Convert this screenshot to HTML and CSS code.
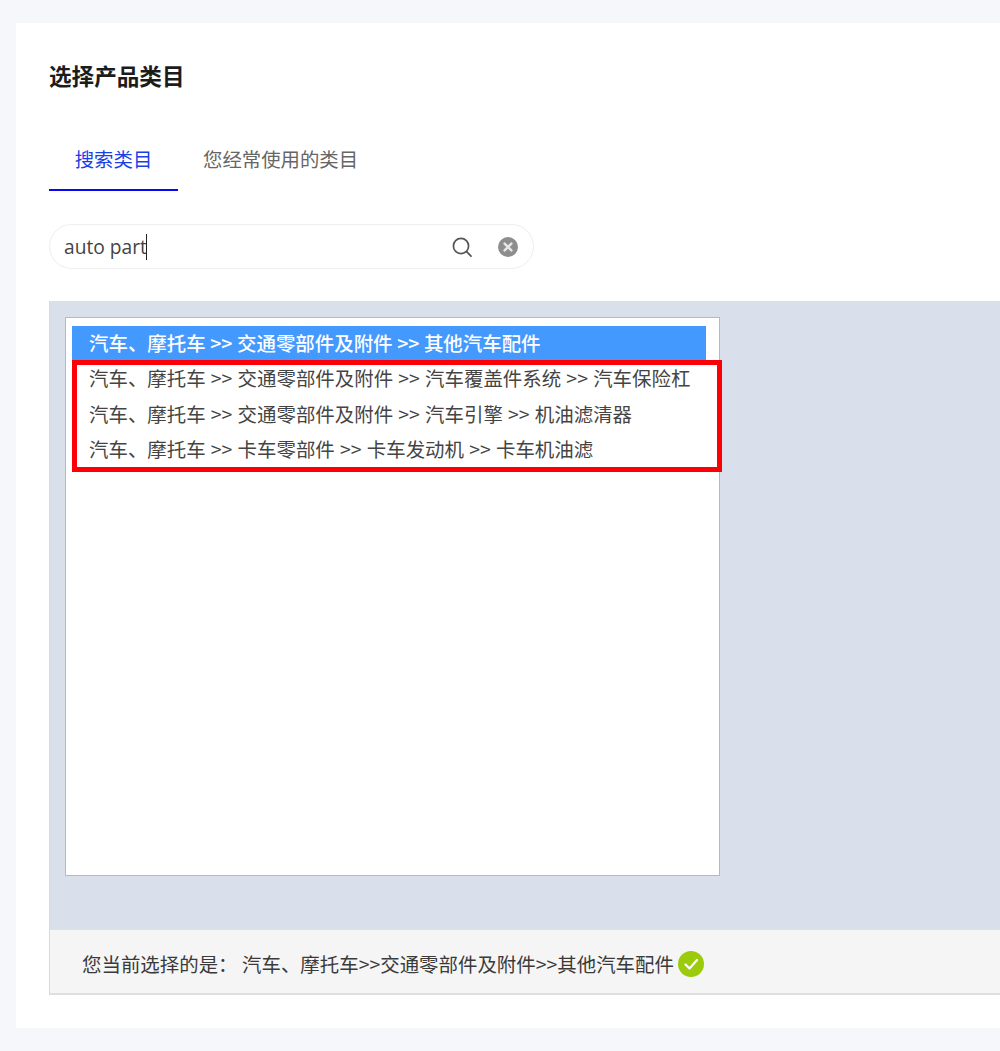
FILE: index.html
```html
<!DOCTYPE html>
<html lang="zh">
<head>
<meta charset="utf-8">
<title>选择产品类目</title>
<link rel="stylesheet" href="styles.css">
</head>
<body>
<div class="clip">
<main class="card">
  <h1 class="title">选择产品类目</h1>
  <nav class="tabs">
    <a class="tab tab-active">搜索类目</a>
    <a class="tab">您经常使用的类目</a>
  </nav>
  <div class="search">
    <span class="search-text">auto part</span><span class="caret"></span>
    <svg class="icon-search" width="22" height="22" viewBox="0 0 22 22" fill="none" stroke="#555" stroke-width="1.7" stroke-linecap="round"><circle cx="10" cy="10" r="7.6"/><path d="M15.6 15.6l4.4 4.6"/></svg>
    <svg class="icon-clear" width="20" height="20" viewBox="0 0 20 20"><circle cx="10" cy="10" r="10" fill="#8e8e8e"/><path d="M6.6 6.6l6.8 6.8M13.4 6.6l-6.8 6.8" stroke="#e8e8e8" stroke-width="2.4" stroke-linecap="round"/></svg>
  </div>
  <section class="panel">
    <div class="panel-body">
      <div class="listbox">
        <ul class="options">
          <li class="option option-selected">汽车、摩托车 &gt;&gt; 交通零部件及附件 &gt;&gt; 其他汽车配件</li>
          <li class="option">汽车、摩托车 &gt;&gt; 交通零部件及附件 &gt;&gt; 汽车覆盖件系统 &gt;&gt; 汽车保险杠</li>
          <li class="option">汽车、摩托车 &gt;&gt; 交通零部件及附件 &gt;&gt; 汽车引擎 &gt;&gt; 机油滤清器</li>
          <li class="option">汽车、摩托车 &gt;&gt; 卡车零部件 &gt;&gt; 卡车发动机 &gt;&gt; 卡车机油滤</li>
        </ul>
        <div class="highlight"></div>
      </div>
    </div>
    <footer class="current">
      <span class="current-label">您当前选择的是：</span>
      <span class="current-path">汽车、摩托车&gt;&gt;交通零部件及附件&gt;&gt;其他汽车配件</span>
      <svg class="icon-ok" width="26" height="26" viewBox="0 0 26 26"><circle cx="13" cy="13" r="13" fill="#9ccb0c"/><path d="M7.5 13.5l4 4 7.5-8.5" fill="none" stroke="#fff" stroke-width="2.2" stroke-linecap="round" stroke-linejoin="round"/></svg>
    </footer>
  </section>
</main>
</div>
</body>
</html>
```
FILE: styles.css
```css
* { box-sizing: border-box; }
html, body { margin: 0; }
body {
  background: #f5f7fb;
  font-family: "Noto Sans CJK SC", "Noto Sans", sans-serif;
  color: #333;
}
.clip {
  width: 1000px;
  height: 1051px;
  overflow: hidden;
  padding: 23px 0 0 16px;
}
.card {
  width: 984px;
  height: 1005px;
  background: #fff;
  padding: 36px 0 0 33px;
}
.title {
  margin: 0;
  font-size: 22.6px;
  line-height: 34px;
  font-weight: 700;
  color: #1c1c1c;
}
.tabs {
  display: flex;
  margin-top: 48px;
  height: 50px;
}
.tab {
  width: 129px;
  height: 50px;
  font-size: 19.4px;
  line-height: 36px;
  text-align: center;
  color: #666;
  white-space: nowrap;
}
.tab + .tab { width: auto; margin-left: 25px; }
.tab-active {
  color: #1a3fe8;
  border-bottom: 2px solid #0808ef;
}
.search {
  display: flex;
  align-items: center;
  width: 485px;
  height: 45px;
  margin-top: 33px;
  padding: 0 15px 0 14px;
  border: 1px solid #eeeeee;
  border-radius: 23px;
  background: #fff;
}
.search-text {
  font-family: "Open Sans", "Noto Sans", sans-serif;
  font-size: 19.2px;
  color: #444;
}
.caret {
  width: 1px;
  height: 26px;
  margin-left: -1px;
  background: #222;
}
.icon-search { margin-left: auto; }
.icon-clear { margin-left: 25px; }
.panel {
  margin-top: 32px;
  height: 694px;
  border-left: 1px solid #d9d9d9;
  border-bottom: 2px solid #dfdfdf;
  display: flex;
  flex-direction: column;
}
.panel-body {
  height: 629px;
  background: #d9e0ec;
  padding: 16px 0 0 15px;
}
.listbox {
  position: relative;
  width: 655px;
  height: 559px;
  background: #fff;
  border: 1px solid #b5b9c0;
  padding: 8px 0 0 6px;
}
.options {
  list-style: none;
  margin: 0;
  padding: 0;
  width: 634px;
}
.option {
  height: 35.6px;
  line-height: 34px;
  padding-left: 17px;
  font-size: 19.45px;
  word-spacing: 0.85px;
  color: #444;
  white-space: nowrap;
}
.option-selected {
  height: 34px;
  margin-bottom: 1px;
  background: #4499ff;
  color: #fff;
  font-weight: 500;
  word-spacing: 0.25px;
}
.highlight {
  position: absolute;
  left: 6px;
  top: 42px;
  width: 650px;
  height: 112px;
  border: 5px solid #fb0007;
}
.current {
  flex: 1;
  display: flex;
  align-items: center;
  background: #f5f5f5;
  padding: 4px 0 0 32px;
  font-size: 19.45px;
  color: #3a3a3a;
  white-space: nowrap;
}
.current-path { margin-left: 4.5px; }
.icon-ok { margin-left: 4px; }
```
